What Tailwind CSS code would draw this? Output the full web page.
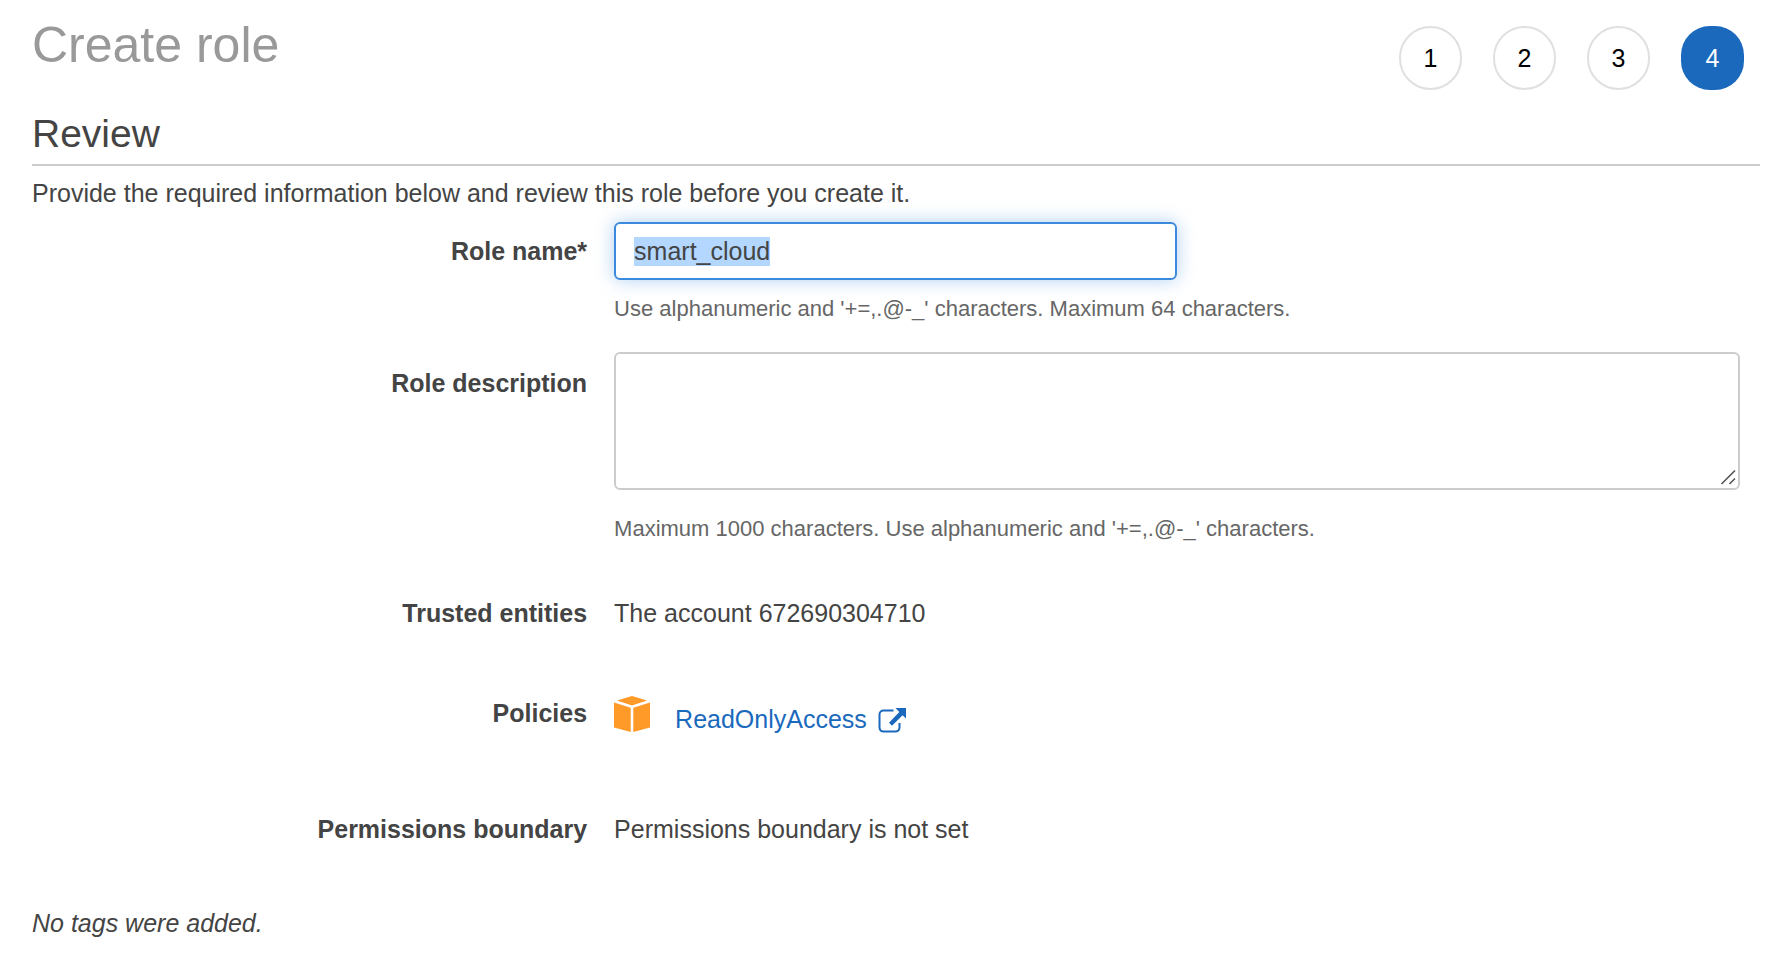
<!DOCTYPE html>
<html lang="en">
<head>
<meta charset="utf-8">
<meta name="viewport" content="width=device-width, initial-scale=1">
<title>Create role</title>
<script src="https://cdn.jsdelivr.net/npm/@tailwindcss/browser@4"></script>
</head>
<body class="bg-white font-['Liberation_Sans',Arial,sans-serif] text-[25px] leading-9 text-[#444]">
<main class="pr-5 pl-8">
  <header class="flex items-start justify-between pt-[17px]">
    <h1 class="text-[50px] leading-14 text-[#999]">Create role</h1>
    <nav aria-label="Steps" class="mt-[9px] mr-4">
      <ol class="flex gap-[31px]">
        <li><button type="button" class="h-16 w-[63px] rounded-full border-2 border-[#e0e0e0] text-black">1</button></li>
        <li><button type="button" class="h-16 w-[63px] rounded-full border-2 border-[#e0e0e0] text-black">2</button></li>
        <li><button type="button" class="h-16 w-[63px] rounded-full border-2 border-[#e0e0e0] text-black">3</button></li>
        <li><button type="button" aria-current="step" class="h-16 w-[63px] rounded-[29px] bg-[#1a69bc] text-white">4</button></li>
      </ol>
    </nav>
  </header>

  <h2 class="mt-[22px] border-b-2 border-[#ccc] pb-2 text-[39px] leading-11">Review</h2>
  <p class="mt-[9px]">Provide the required information below and review this role before you create it.</p>

  <form class="mt-[11px] mr-5">
    <div class="grid grid-cols-[32.5%_1fr] gap-x-[27px]">
      <label for="role-name" class="mt-[11px] text-right font-bold">Role name*</label>
      <div>
        <input id="role-name" type="text" value="smart_cloud" autofocus class="block h-[58px] w-1/2 rounded-md border-2 border-[#3b8ade] px-[18px] shadow-[0_0_18px_rgba(59,138,222,0.4)] outline-none selection:bg-[#b3d7ff] selection:text-[#444]">
        <p class="mt-[14px] text-[22px] leading-[30px] text-[#666]">Use alphanumeric and '+=,.@-_' characters. Maximum 64 characters.</p>
      </div>
    </div>

    <div class="mt-7 grid grid-cols-[32.5%_1fr] gap-x-[27px]">
      <label for="role-description" class="mt-[13px] text-right font-bold">Role description</label>
      <div>
        <div class="relative">
          <textarea id="role-description" class="block h-[138px] w-full resize-none rounded-md border-2 border-[#ccc] px-[18px] py-2 outline-none"></textarea>
          <svg class="pointer-events-none absolute right-1 bottom-[5px] h-4 w-4" viewBox="0 0 16 16" fill="none" stroke="#555" stroke-width="1.6" aria-hidden="true"><path d="M1.500 15 15 1.500M9.500 15 15 9.500"/></svg>
        </div>
        <p class="mt-6 text-[22px] leading-[30px] text-[#666]">Maximum 1000 characters. Use alphanumeric and '+=,.@-_' characters.</p>
      </div>
    </div>

    <dl>
      <div class="mt-[51px] grid grid-cols-[32.5%_1fr] gap-x-[27px]">
        <dt class="text-right font-bold">Trusted entities</dt>
        <dd>The account 672690304710</dd>
      </div>
      <div class="mt-16 grid grid-cols-[32.5%_1fr] gap-x-[27px]">
        <dt class="text-right font-bold">Policies</dt>
        <dd class="flex items-start gap-[25px]">
          <svg class="mt-px h-9 w-9" viewBox="0 0 36 36" fill="#ff9928" aria-hidden="true"><path d="M18 0 33 4.600 18 9.500 3 4.600zM0 6.500 16.700 11.800V36L0 31.500zM36 6.500 19.300 11.800V36L36 31.500z"/></svg>
          <a href="#" class="mt-1.5 flex items-center gap-[11px] text-[#1a69bc]">ReadOnlyAccess
            <svg class="h-7 w-7" viewBox="0 0 28 28" fill="none" aria-hidden="true"><path d="M15.500 5.600H5.500a4 4 0 0 0-4 4v13a4 4 0 0 0 4 4h12a4 4 0 0 0 4-4V18" stroke="#1a69bc" stroke-width="2"/><path d="M17.500 3H28v10.500l-3.400-3.300L14 20.800 11 17.800 21.300 7z" fill="#1a69bc"/></svg>
          </a>
        </dd>
      </div>
      <div class="mt-[74px] grid grid-cols-[32.5%_1fr] gap-x-[27px]">
        <dt class="text-right font-bold">Permissions boundary</dt>
        <dd>Permissions boundary is not set</dd>
      </div>
    </dl>
  </form>

  <p class="mt-[58px] italic">No tags were added.</p>
</main>
<script>
  const roleName = document.getElementById('role-name');
  roleName.focus();
  roleName.select();
</script>
</body>
</html>
